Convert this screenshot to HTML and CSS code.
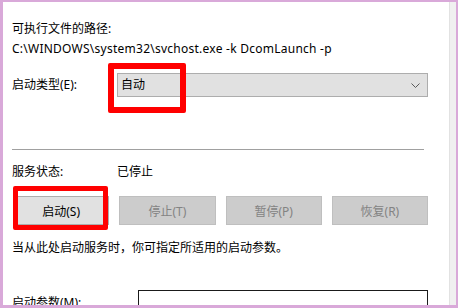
FILE: index.html
```html
<!DOCTYPE html>
<html lang="zh-CN">
<head>
<meta charset="utf-8">
<title>服务属性</title>
<link rel="stylesheet" href="styles.css">
</head>
<body>
<div class="frame">
  <div class="content">
    <div class="line first">可执行文件的路径:</div>
    <div class="line path">C:\WINDOWS\system32\svchost.exe -k DcomLaunch -p</div>

    <div class="field type-row">
      <span class="label">启动类型(E):</span>
      <div class="select">
        <span class="select-text">自动</span>
        <svg class="chev" width="9" height="5" viewBox="0 0 9 5"><path d="M0.5 0.5 L4.5 4.5 L8.5 0.5" fill="none" stroke="#5a5a5a" stroke-width="1"/></svg>
        <div class="mark mark-select"></div>
      </div>
    </div>

    <div class="sep"></div>

    <div class="field status-row">
      <span class="label">服务状态:</span>
      <span>已停止</span>
    </div>

    <div class="buttons">
      <div class="btn-wrap">
        <button class="btn primary">启动(S)</button>
        <div class="mark mark-btn"></div>
      </div>
      <button class="btn" disabled>停止(T)</button>
      <button class="btn" disabled>暂停(P)</button>
      <button class="btn" disabled>恢复(R)</button>
    </div>

    <div class="line info">当从此处启动服务时，你可指定所适用的启动参数。</div>

    <div class="field param-row">
      <span class="label">启动参数(M):</span>
      <div class="input"></div>
    </div>
  </div>
  <div class="scroll"></div>
</div>
</body>
</html>
```

FILE: styles.css
```css
* { box-sizing: border-box; }
html, body { margin: 0; padding: 0; }
body {
  width: 458px;
  height: 308px;
  overflow: hidden;
  font-family: "Noto Sans", "Noto Sans CJK SC", sans-serif;
  font-size: 12px;
  color: #000;
}
.frame {
  display: flex;
  width: 458px;
  height: 308px;
  padding: 2px 2px 3px 3px;
  background: #d9a9d9;
}
.content {
  flex: 1;
  background: #fff;
  padding: 0 21px 0 9px;
  overflow: hidden;
}
.scroll {
  width: 7px;
  background: #f0f0f0;
  border-left: 1px solid #e2e2e2;
}
.line {
  line-height: 20px;
  white-space: nowrap;
}
.first { margin-top: 17px; }
.path { letter-spacing: 0.25px; }
.field {
  display: grid;
  grid-template-columns: 105px 1fr;
  align-items: center;
  line-height: 20px;
}
.type-row { margin-top: 14px; }
.select {
  position: relative;
  height: 24px;
  background: #e1e1e1;
  border: 1px solid #adadad;
  display: flex;
  align-items: center;
  justify-content: space-between;
  padding: 0 7px 0 3px;
}
.mark {
  position: absolute;
  border: 6px solid #ff0000;
  border-radius: 2px;
}
.mark-select {
  left: -10px;
  top: -11px;
  width: 78px;
  height: 50px;
}
.sep {
  margin: 52px 4px 0 0;
  height: 1px;
  background: #a0a0a0;
}
.status-row { margin-top: 12px; }
.buttons {
  margin: 14px 0 0 1px;
  display: grid;
  grid-template-columns: repeat(4, 1fr);
  gap: 10px;
}
.btn-wrap { position: relative; }
.btn {
  width: 100%;
  height: 29px;
  font: inherit;
  background: #cccccc;
  border: 1px solid #bfbfbf;
  color: #838383;
  padding: 0;
}
.btn.primary {
  background: #e1e1e1;
  border-color: #adadad;
  color: #000;
}
.mark-btn {
  left: 0;
  top: -10px;
  width: 95px;
  height: 44px;
  border-width: 5px;
}
.info { margin-top: 13px; }
.param-row {
  margin-top: 32px;
  grid-template-columns: 126px 1fr;
  align-items: start;
}
.param-row .label { margin-top: 3px; }
.input {
  height: 24px;
  border: 1px solid #1a1a1a;
  background: #fff;
}
```
